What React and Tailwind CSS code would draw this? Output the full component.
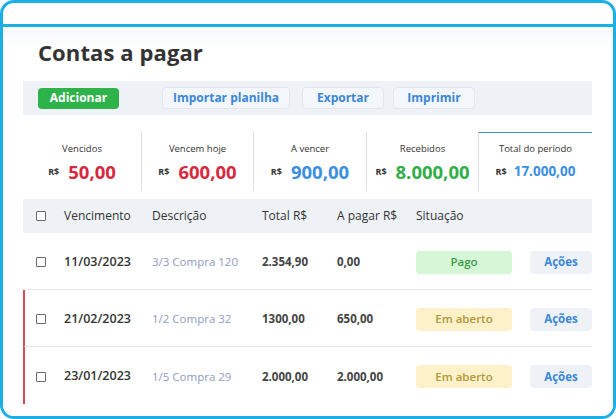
import React from 'react';

const cards = [
  { label: 'Vencidos', value: '50,00', color: 'text-[#d7283d]', w: 'w-[118px]' },
  { label: 'Vencem hoje', value: '600,00', color: 'text-[#d7283d]', w: 'w-[112px]' },
  { label: 'A vencer', value: '900,00', color: 'text-[#3b8fe0]', w: 'w-[113px]' },
  { label: 'Recebidos', value: '8.000,00', color: 'text-[#2fae4a]', w: 'w-[112px]' },
];

const rows = [
  { date: '11/03/2023', desc: '3/3 Compra 120', total: '2.354,90', pagar: '0,00', status: 'Pago', late: false },
  { date: '21/02/2023', desc: '1/2 Compra 32', total: '1300,00', pagar: '650,00', status: 'Em aberto', late: true },
  { date: '23/01/2023', desc: '1/5 Compra 29', total: '2.000,00', pagar: '2.000,00', status: 'Em aberto', late: true },
];

const Checkbox = () => (
  <div className="w-[10px] h-[10px] border border-[#6b6b6b] rounded-[1px] bg-white" />
);

export default function App() {
  return (
    <div className="w-[616px] h-[419px] bg-white" style={{ fontFamily: '"Open Sans", "Liberation Sans", sans-serif' }}>
      <div className="w-full h-full border-[3px] border-[#1ab0e6] rounded-[14px] overflow-hidden flex flex-col">
        <div className="h-[24px] shrink-0 border-b-[3px] border-[#1ab0e6]" />

        <div className="flex-1 pl-[20px] pr-[21px] bg-gradient-to-b from-[#f6f8fa] to-white to-[6%]">
          <h1 className="pl-[15px] pt-[9px] h-[54px] text-[22px] font-bold text-[#333] tracking-[0.1px]">Contas a pagar</h1>

          {/* toolbar */}
          <div className="h-[34px] bg-[#eef2f7] flex items-center pl-[15px]">
            <button className="h-[21px] w-[81px] rounded-[4px] bg-[#2db34a] text-white text-[12px] font-bold">Adicionar</button>
            <button className="ml-[43px] h-[22px] w-[128px] rounded-[4px] bg-[#f3f6fa] border border-[#e2e7ee] text-[#3a87d8] text-[12px] font-bold">Importar planilha</button>
            <button className="ml-[12px] h-[22px] w-[82px] rounded-[4px] bg-[#f3f6fa] border border-[#e2e7ee] text-[#3a87d8] text-[12px] font-bold">Exportar</button>
            <button className="ml-[9px] h-[22px] w-[82px] rounded-[4px] bg-[#f3f6fa] border border-[#e2e7ee] text-[#3a87d8] text-[12px] font-bold">Imprimir</button>
          </div>

          {/* cards */}
          <div className="flex mt-[17px] h-[59px]">
            {cards.map((c, i) => (
              <div key={c.label} className={`${c.w} flex flex-col items-center pt-[10px] ${i > 0 ? 'border-l border-[#dcdfe3]' : ''}`}>
                <div className="text-[9.5px] text-[#333]">{c.label}</div>
                <div className="flex items-center gap-[9px] mt-[2px]">
                  <span className="text-[9px] font-bold text-[#333]">R$</span>
                  <span className={`text-[18.5px] font-bold ${c.color}`}>{c.value}</span>
                </div>
              </div>
            ))}
            <div className="w-[114px] flex flex-col items-center pt-[9px] border-l border-t border-l-[#dcdfe3] border-t-[#3b8fe0]">
              <div className="text-[9.5px] text-[#333]">Total do período</div>
              <div className="flex items-center gap-[7px] mt-[5px]">
                <span className="text-[9px] font-bold text-[#333]">R$</span>
                <span className="text-[13.5px] font-bold text-[#3b8fe0]">17.000,00</span>
              </div>
            </div>
          </div>

          {/* table header */}
          <div className="mt-[8px] h-[34px] bg-[#eef2f7] grid grid-cols-[41px_88px_110px_75px_79px_114px_62px] items-center text-[12px] text-[#333]">
            <div className="pl-[13px]"><Checkbox /></div>
            <div>Vencimento</div>
            <div>Descrição</div>
            <div>Total R$</div>
            <div>A pagar R$</div>
            <div>Situação</div>
            <div />
          </div>

          {rows.map((r, i) => (
            <div
              key={r.date}
              className={`h-[57px] pt-[2px] grid grid-cols-[39px_88px_110px_75px_79px_114px_62px] items-center border-l-2 ${i < rows.length - 1 ? 'border-b border-b-[#e3e6ea]' : ''} ${r.late ? 'border-l-[#d9475a]' : 'border-l-transparent'}`}
            >
              <div className="pl-[11px]"><Checkbox /></div>
              <div className="text-[12.5px] font-semibold text-[#333]">{r.date}</div>
              <div className="text-[11.5px] text-[#8e9bc2]">{r.desc}</div>
              <div className="text-[11.5px] font-bold text-[#444]">{r.total}</div>
              <div className="text-[11.5px] font-bold text-[#444]">{r.pagar}</div>
              <div>
                {r.status === 'Pago' ? (
                  <div className="w-[96px] h-[23px] rounded-[4px] bg-[#d5f7d6] text-[#3c9a4c] text-[11.5px] font-semibold flex items-center justify-center">Pago</div>
                ) : (
                  <div className="w-[96px] h-[23px] rounded-[4px] bg-[#fcf1c9] text-[#b0983a] text-[11.5px] font-semibold flex items-center justify-center">Em aberto</div>
                )}
              </div>
              <div className="h-[23px] rounded-[4px] bg-[#eef2f7] text-[#3a87d8] text-[11.5px] font-bold flex items-center justify-center">Ações</div>
            </div>
          ))}
        </div>
      </div>
    </div>
  );
}
